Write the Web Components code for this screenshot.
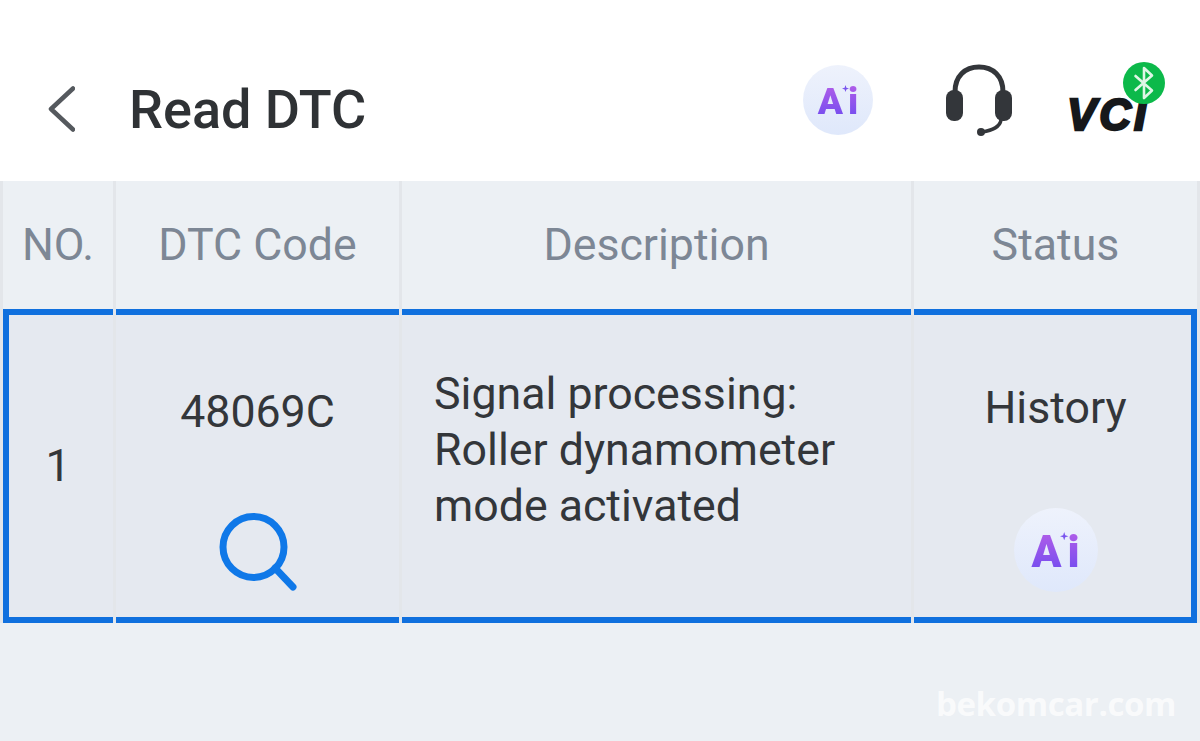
<!DOCTYPE html>
<html>
<head>
<meta charset="utf-8">
<title>Read DTC</title>
<style>
    html, body { margin: 0; padding: 0; background: #ecf0f4; }
    body { width: 1200px; height: 741px; overflow: hidden; font-family: Roboto, "Liberation Sans", sans-serif; }
</style>
</head>
<body>
<read-dtc-page></read-dtc-page>

<script>
class AiBadge extends HTMLElement {
    connectedCallback() {
        const size = parseInt(this.getAttribute('size')) || 70;
        const k = size / 70;
        this.attachShadow({ mode: 'open' }).innerHTML = `
            <style>
                :host {
                    display: flex;
                    width: ${size}px;
                    height: ${size}px;
                    border-radius: 50%;
                    background: linear-gradient(180deg, #eef2fc 0%, #dfe8fb 100%);
                    align-items: center;
                    justify-content: center;
                    position: relative;
                }
                span {
                    font: 900 ${Math.round(37 * k)}px/1 Roboto, "Liberation Sans", sans-serif;
                    letter-spacing: ${5 * k}px;
                    padding-left: ${5 * k}px;
                    background: linear-gradient(180deg, #b45ee8 0%, #6f4cf0 100%);
                    -webkit-background-clip: text;
                    background-clip: text;
                    color: transparent;
                    margin-top: ${3 * k}px;
                }
                svg {
                    position: absolute;
                    left: ${39 * k}px;
                    top: ${20 * k}px;
                    width: ${7 * k}px;
                    height: ${7 * k}px;
                }
            </style>
            <span>Ai</span>
            <svg viewBox="0 0 8 8"><path d="M4 0 5 3 8 4 5 5 4 8 3 5 0 4 3 3Z" fill="#7a55ee"/></svg>
        `;
    }
}

class VciStatus extends HTMLElement {
    connectedCallback() {
        this.attachShadow({ mode: 'open' }).innerHTML = `
            <style>
                :host {
                    display: block;
                    position: relative;
                    width: 98px;
                    height: 76px;
                }
                span {
                    position: absolute;
                    left: -2px;
                    top: 27px;
                    font: italic 700 44px/52px "Liberation Sans", sans-serif;
                    color: #16181b;
                    -webkit-text-stroke: 2.4px #16181b;
                    letter-spacing: 3px;
                }
                svg {
                    position: absolute;
                    left: 54px;
                    top: 0;
                    width: 42px;
                    height: 42px;
                }
            </style>
            <span>VCI</span>
            <svg viewBox="0 0 42 42">
                <circle cx="21" cy="21" r="21" fill="#0cb94a"/>
                <path d="M12.500 14 29 28.500 21 36V6l8 7.500L12.500 28" fill="none" stroke="#dff6e6" stroke-width="2.600" stroke-linejoin="round" stroke-linecap="round"/>
            </svg>
        `;
    }
}

class TopBar extends HTMLElement {
    connectedCallback() {
        this.attachShadow({ mode: 'open' }).innerHTML = `
            <style>
                :host {
                    display: flex;
                    height: 181px;
                    box-sizing: border-box;
                    background: #fff;
                    align-items: center;
                    padding: 33px 33px 0 47px;
                }
                .back { width: 28px; height: 46px; flex: none; margin-top: 4px; }
                h1 {
                    flex: 1;
                    margin: 6px 0 0 54px;
                    font: 500 54px/60px Roboto, "Liberation Sans", sans-serif;
                    color: #2f3235;
                }
                .actions { display: flex; align-items: center; margin-bottom: 14px; }
                .head { width: 68px; height: 72px; margin: 0 56px 0 72px; }
            </style>
            <svg class="back" viewBox="0 0 28 46">
                <path d="M26 2.500 4 23l22 20.500" fill="none" stroke="#55595e" stroke-width="4.500" stroke-linecap="round" stroke-linejoin="round"/>
            </svg>
            <h1>Read DTC</h1>
            <div class="actions">
                <ai-badge size="70"></ai-badge>
                <svg class="head" viewBox="0 0 68 72">
                    <path d="M10 28C10 12 20 3 34 3s24 9 24 25" fill="none" stroke="#33363a" stroke-width="5"/>
                    <rect x="1" y="26" width="17" height="31" rx="8" fill="#33363a"/>
                    <rect x="50" y="26" width="17" height="31" rx="8" fill="#33363a"/>
                    <path d="M56 56C55 63 48 66 37 68" fill="none" stroke="#33363a" stroke-width="3.500"/>
                    <circle cx="36" cy="68" r="4" fill="#33363a"/>
                </svg>
                <vci-status></vci-status>
            </div>
        `;
    }
}

class DtcHeadCell extends HTMLElement {
    connectedCallback() {
        this.attachShadow({ mode: 'open' }).innerHTML = `
            <style>
                :host {
                    display: flex;
                    align-items: center;
                    justify-content: center;
                    background: #ecf0f4;
                    color: #7d8795;
                    font: 400 44.7px/50px Roboto, "Liberation Sans", sans-serif;
                }
            </style>
            <slot></slot>
        `;
    }
}

class DtcCell extends HTMLElement {
    connectedCallback() {
        this.attachShadow({ mode: 'open' }).innerHTML = `
            <style>
                :host {
                    display: flex;
                    flex-direction: column;
                    box-sizing: border-box;
                    background: #e5e9f0;
                    color: #33363a;
                    font: 400 44.7px/56px Roboto, "Liberation Sans", sans-serif;
                    border-top: 6px solid #1070de;
                    border-bottom: 6px solid #1070de;
                }
                :host([first]) { border-left: 6px solid #1070de; }
                :host([last]) { border-right: 6px solid #1070de; }
            </style>
            <slot></slot>
        `;
    }
}

class DtcTable extends HTMLElement {
    connectedCallback() {
        this.attachShadow({ mode: 'open' }).innerHTML = `
            <style>
                :host {
                    display: grid;
                    grid-template-columns: 110px 283px 509px 283px;
                    grid-template-rows: 128px 314px;
                    column-gap: 3px;
                    padding: 0 3px;
                    background: #e3e6ea;
                }
                .no { align-items: center; justify-content: center; padding-bottom: 1px; padding-right: 6px; }
                .code { align-items: center; }
                .code span { margin-top: 69px; }
                .code svg { width: 78px; height: 78px; margin-top: 73px; }
                .desc { padding: 51px 30px 0 32px; }
                .status { align-items: center; padding-left: 6px; }
                .status span { margin-top: 65px; }
                .status ai-badge { margin-top: 72px; }
            </style>
            <dtc-head-cell>NO.</dtc-head-cell>
            <dtc-head-cell>DTC Code</dtc-head-cell>
            <dtc-head-cell>Description</dtc-head-cell>
            <dtc-head-cell>Status</dtc-head-cell>
            <dtc-cell first class="no">1</dtc-cell>
            <dtc-cell class="code">
                <span>48069C</span>
                <svg viewBox="0 0 78 78">
                    <circle cx="34.500" cy="34" r="30.500" fill="none" stroke="#0f78e8" stroke-width="7"/>
                    <path d="M56 55 74 74" fill="none" stroke="#0f78e8" stroke-width="7" stroke-linecap="round"/>
                </svg>
            </dtc-cell>
            <dtc-cell class="desc">Signal processing: Roller dynamometer mode activated</dtc-cell>
            <dtc-cell last class="status">
                <span>History</span>
                <ai-badge size="84"></ai-badge>
            </dtc-cell>
        `;
    }
}

class ReadDtcPage extends HTMLElement {
    connectedCallback() {
        this.attachShadow({ mode: 'open' }).innerHTML = `
            <style>
                :host {
                    display: flex;
                    flex-direction: column;
                    position: relative;
                    width: 1200px;
                    height: 741px;
                    background: #ecf0f4;
                }
                .mark {
                    position: absolute;
                    right: 24px;
                    bottom: 17px;
                    font: 700 33px/40px "Open Sans", "Liberation Sans", sans-serif;
                    letter-spacing: -.4px;
                    color: rgba(255, 255, 255, .72);
                }
            </style>
            <top-bar></top-bar>
            <dtc-table></dtc-table>
            <div class="mark">bekomcar.com</div>
        `;
    }
}

customElements.define('ai-badge', AiBadge);
customElements.define('vci-status', VciStatus);
customElements.define('top-bar', TopBar);
customElements.define('dtc-head-cell', DtcHeadCell);
customElements.define('dtc-cell', DtcCell);
customElements.define('dtc-table', DtcTable);
customElements.define('read-dtc-page', ReadDtcPage);
</script>
</body>
</html>
